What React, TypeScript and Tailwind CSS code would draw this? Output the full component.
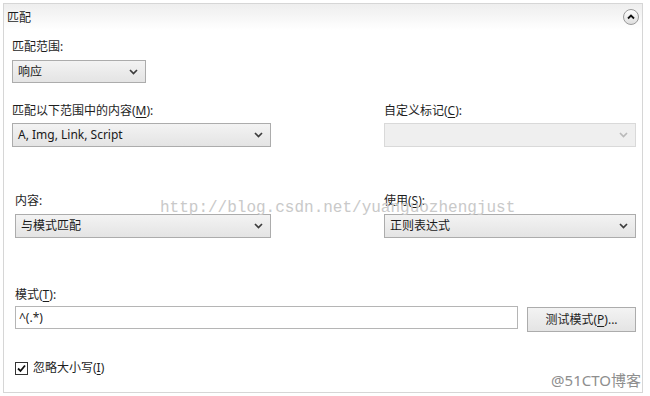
import React from "react";

const Chevron = ({ disabled }: { disabled?: boolean }) => (
  <svg width="9" height="6" viewBox="0 0 9 6">
    <polyline
      points="1,1 4.5,4.5 8,1"
      fill="none"
      stroke={disabled ? "#b9b9b9" : "#3c3c3c"}
      strokeWidth="1.7"
    />
  </svg>
);

const U = ({ c }: { c: string }) => <span className="underline underline-offset-2">{c}</span>;

function Select({ text, w, h, disabled }: { text?: string; w: string; h: string; disabled?: boolean }) {
  return (
    <div
      className={
        disabled
          ? `${w} ${h} flex items-center justify-between border border-[#d9d9d9] bg-[#efefef] pl-[5px] pr-[7px]`
          : `${w} ${h} flex items-center justify-between border border-[#acacac] bg-linear-to-b from-[#f3f3f3] to-[#e4e4e4] pl-[5px] pr-[7px]`
      }
    >
      <span className="text-[12px] leading-[16px] text-[#1a1a1a]">{text}</span>
      <Chevron disabled={disabled} />
    </div>
  );
}

export default function App() {
  return (
    <div className="w-[650px] h-[396px] bg-white relative overflow-hidden font-['Noto_Sans','Noto_Sans_CJK_SC',sans-serif] text-[#1e1e1e]">
      <div className="mt-[3px] ml-[3px] w-[640px] h-[390px] border border-[#d6d6d6] flex flex-col">
        {/* header */}
        <div className="h-[26px] flex items-center justify-between pl-[3px] pr-[3px] bg-linear-to-b from-[#eeeeee] to-white">
          <span className="text-[12px] leading-[16px] mt-[2px]">匹配</span>
          <div className="w-[16px] h-[16px] rounded-full border border-[#9a9a9a] bg-linear-to-b from-white to-[#dedede] flex items-center justify-center">
            <svg width="8" height="6" viewBox="0 0 8 6">
              <polyline points="1,4.5 4,1.5 7,4.5" fill="none" stroke="#111" strokeWidth="1.8" />
            </svg>
          </div>
        </div>

        {/* row 1 */}
        <div className="pl-[8px] mt-[9px] flex flex-col">
          <span className="text-[12px] leading-[16px]">匹配范围:</span>
          <div className="mt-[5px]">
            <Select text="响应" w="w-[134px]" h="h-[23px]" />
          </div>
        </div>

        {/* row 2 */}
        <div className="pl-[8px] mt-[20px] grid grid-cols-[259px_252px] gap-x-[113px]">
          <div className="flex flex-col">
            <span className="text-[12px] leading-[16px]">
              匹配以下范围中的内容(<U c="M" />):
            </span>
            <div className="mt-[4px]">
              <Select text="A, Img, Link, Script" w="w-[259px]" h="h-[24px]" />
            </div>
          </div>
          <div className="flex flex-col">
            <span className="text-[12px] leading-[16px]">
              自定义标记(<U c="C" />):
            </span>
            <div className="mt-[4px]">
              <Select w="w-[252px]" h="h-[24px]" disabled />
            </div>
          </div>
        </div>

        {/* row 3 */}
        <div className="pl-[8px] mt-[46px] grid grid-cols-[259px_252px] gap-x-[113px]">
          <div className="flex flex-col pl-[3px]">
            <span className="text-[12px] leading-[16px]">内容:</span>
            <div className="mt-[5px]">
              <Select text="与模式匹配" w="w-[256px]" h="h-[24px]" />
            </div>
          </div>
          <div className="flex flex-col">
            <span className="text-[12px] leading-[16px]">
              使用(<U c="S" />):
            </span>
            <div className="mt-[5px]">
              <Select text="正则表达式" w="w-[252px]" h="h-[24px]" />
            </div>
          </div>
        </div>

        {/* row 4 */}
        <div className="pl-[11px] mt-[49px] flex flex-col">
          <span className="text-[12px] leading-[16px]">
            模式(<U c="T" />):
          </span>
          <div className="mt-[3px] flex items-start">
            <div className="w-[503px] h-[23px] border border-[#b5b5b5] bg-white flex items-center pl-[3px]">
              <span className="text-[12px] leading-[16px]">^(.*)</span>
            </div>
            <div className="ml-[9px] mt-[1px] w-[109px] h-[25px] border border-[#acacac] bg-linear-to-b from-[#f3f3f3] to-[#e4e4e4] flex items-center justify-center">
              <span className="text-[12px] leading-[16px]">
                测试模式(<U c="P" />)...
              </span>
            </div>
          </div>
        </div>

        {/* row 5 */}
        <div className="pl-[11px] mt-[28px] flex items-center h-[16px]">
          <div className="w-[13px] h-[13px] border border-[#333] bg-white flex items-center justify-center">
            <svg width="11" height="11" viewBox="0 0 11 11">
              <polyline points="2,5.5 4.5,8 9,2.5" fill="none" stroke="#111" strokeWidth="1.8" />
            </svg>
          </div>
          <span className="ml-[5px] text-[12px] leading-[16px]">
            忽略大小写(<U c="I" />)
          </span>
        </div>
      </div>

      {/* watermarks */}
      <div className="absolute left-[160px] top-[198px] text-[16px] leading-[20px] text-[#c9c9c9] font-['Liberation_Mono',monospace] pointer-events-none">
        http://blog.csdn.net/yuanguozhengjust
      </div>
      <div className="absolute right-[9px] top-[371px] text-[15px] leading-[18px] text-[#8e8e8e] font-['Noto_Sans','Noto_Sans_CJK_SC',sans-serif] pointer-events-none">
        @51CTO博客
      </div>
    </div>
  );
}
